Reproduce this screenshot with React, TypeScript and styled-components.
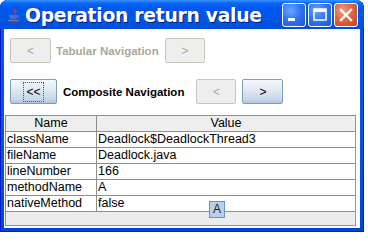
import React from "react";
import styled, { createGlobalStyle } from "styled-components";

const GlobalStyle = createGlobalStyle`
  body {
    margin: 0;
    background: #ffffff;
    font-family: "Liberation Sans", Arial, sans-serif;
  }
`;

const Window = styled.div`
  position: relative;
  width: 364px;
  height: 232px;
  display: flex;
  flex-direction: column;
  background: linear-gradient(to bottom, #0058ee 0%, #0055e5 60%, #0046d6 100%);
  border-radius: 8px 8px 0 0;
  box-sizing: border-box;
  padding: 0 4px 4px 4px;
  box-shadow: inset 1px 0 0 #0019cf, inset -1px 0 0 #001ea0, inset 0 -1px 0 #001ea0;
`;

const TitleBar = styled.div`
  height: 30px;
  display: flex;
  align-items: center;
  margin: 0 -4px;
  padding: 1px 6px 0 7px;
  box-sizing: border-box;
  border-radius: 8px 8px 0 0;
  background: linear-gradient(
    to bottom,
    #3d95ff 0px,
    #0a66f6 3px,
    #0058ee 8px,
    #0055e5 20px,
    #0050dd 27px,
    #0046d0 30px
  );
`;

const AppIcon = styled.svg`
  width: 14px;
  height: 16px;
  margin-right: 4px;
  flex: none;
`;

const Title = styled.div`
  flex: 1;
  color: #ffffff;
  font-family: "DejaVu Sans", Verdana, sans-serif;
  font-weight: bold;
  font-size: 18.8px;
  letter-spacing: -0.3px;
  text-shadow: 1px 1px 0 #0a1883;
  white-space: nowrap;
`;

const CaptionButton = styled.div<{ $close?: boolean }>`
  width: 22px;
  height: 22px;
  margin-left: 2px;
  border: 1px solid #ffffff;
  border-radius: 3px;
  display: flex;
  align-items: center;
  justify-content: center;
  background: ${p =>
    p.$close
      ? "radial-gradient(circle at 35% 30%, #f0a080 0%, #e1653e 45%, #c4411c 100%)"
      : "radial-gradient(circle at 35% 30%, #6aa6ff 0%, #2f72ef 50%, #1d55d6 100%)"};
`;

const Client = styled.div`
  flex: 1;
  background: #ffffff;
  display: flex;
  flex-direction: column;
  padding: 9px 1px 2px 1px;
`;

const NavRow = styled.div<{ $gapAfter: number }>`
  display: flex;
  align-items: center;
  height: 25px;
  padding-left: 5px;
  margin-bottom: ${p => p.$gapAfter}px;
`;

const NavButton = styled.div<{ $w: number; $disabled?: boolean; $ml?: number }>`
  width: ${p => p.$w}px;
  height: 25px;
  box-sizing: border-box;
  margin-left: ${p => p.$ml ?? 0}px;
  flex: none;
  display: flex;
  align-items: center;
  justify-content: center;
  font-family: "Liberation Sans", Arial, sans-serif;
  font-size: 12px;
  border: 1px solid ${p => (p.$disabled ? "#c9c7ba" : "#7f9db9")};
  border-radius: 2px;
  color: ${p => (p.$disabled ? "#aca899" : "#000000")};
  background: ${p =>
    p.$disabled
      ? "#eeeeee"
      : "linear-gradient(to bottom, #f4f8fc 0%, #dfe8f3 45%, #c6d6e9 85%, #b0c5dd 100%)"};
`;

const FocusBox = styled.span`
  outline: 1px dotted #555555;
  padding: 2px 2px;
  line-height: 14px;
`;

const NavLabel = styled.div<{ $disabled?: boolean; $ml: number }>`
  margin-left: ${p => p.$ml}px;
  font-weight: bold;
  font-size: 11.5px;
  color: ${p => (p.$disabled ? "#aca899" : "#000000")};
  white-space: nowrap;
`;

const ScrollPane = styled.div`
  width: 351px;
  height: 111px;
  box-sizing: border-box;
  border: 1px solid #8e8f8f;
  border-right-color: #9a9a9a;
  background: #ececec;
  position: relative;
`;

const Table = styled.div`
  display: grid;
  grid-template-columns: 91px 1fr;
`;

const HeaderCell = styled.div<{ $last?: boolean }>`
  height: 15px;
  line-height: 15px;
  background: #eeeeee;
  border-bottom: 1px solid #8e8e8e;
  border-right: ${p => (p.$last ? "none" : "1px solid #8e8e8e")};
  text-align: center;
  font-size: 12.5px;
  color: #000000;
`;

const Cell = styled.div<{ $last?: boolean }>`
  height: 15px;
  line-height: 15px;
  background: #ffffff;
  border-bottom: 1px solid #8e8e8e;
  border-right: ${p => (p.$last ? "none" : "1px solid #8e8e8e")};
  padding-left: 1px;
  font-size: 12.5px;
  color: #000000;
  white-space: nowrap;
  overflow: hidden;
`;

const Tip = styled.div`
  position: absolute;
  left: 203px;
  top: 85px;
  width: 14px;
  height: 15px;
  border: 1px solid #6f8fbf;
  background: #b8cfe8;
  font-size: 12px;
  line-height: 15px;
  text-align: center;
  color: #222222;
`;

const rows: [string, string][] = [
  ["className", "Deadlock$DeadlockThread3"],
  ["fileName", "Deadlock.java"],
  ["lineNumber", "166"],
  ["methodName", "A"],
  ["nativeMethod", "false"],
];

const JavaIcon = () => (
  <AppIcon viewBox="0 0 14 16">
    <path d="M7 1 C5 3 9 4 7 6 M9 2 C8 4 10 5 8 7" stroke="#e03020" strokeWidth="1.2" fill="none" />
    <path d="M2 8 H11 C11 11 10 12 6.5 12 C3 12 2 11 2 8 Z" fill="#4a6fc0" />
    <path d="M11 9 C13 9 13 11 11 11" stroke="#4a6fc0" strokeWidth="1" fill="none" />
    <path d="M1 13.5 H12" stroke="#5a7fd0" strokeWidth="1.2" />
    <path d="M3 15 H10" stroke="#c03020" strokeWidth="1" />
  </AppIcon>
);

const App: React.FC = () => (
  <>
    <GlobalStyle />
    <Window>
      <TitleBar>
        <JavaIcon />
        <Title>Operation return value</Title>
        <CaptionButton>
          <svg width="22" height="22" viewBox="0 0 22 22">
            <rect x="5" y="14" width="7" height="3" fill="#ffffff" />
          </svg>
        </CaptionButton>
        <CaptionButton>
          <svg width="22" height="22" viewBox="0 0 22 22">
            <rect x="5" y="5" width="12" height="11" fill="none" stroke="#ffffff" strokeWidth="1.5" />
            <rect x="5" y="5" width="12" height="3" fill="#ffffff" />
          </svg>
        </CaptionButton>
        <CaptionButton $close>
          <svg width="22" height="22" viewBox="0 0 22 22">
            <path d="M6 6 L16 16 M16 6 L6 16" stroke="#ffffff" strokeWidth="2.4" strokeLinecap="square" />
          </svg>
        </CaptionButton>
      </TitleBar>
      <Client>
        <NavRow $gapAfter={16}>
          <NavButton $w={41} $disabled>&lt;</NavButton>
          <NavLabel $disabled $ml={5}>Tabular Navigation</NavLabel>
          <NavButton $w={40} $disabled $ml={6}>&gt;</NavButton>
        </NavRow>
        <NavRow $gapAfter={11}>
          <NavButton $w={47}>
            <FocusBox>&lt;&lt;</FocusBox>
          </NavButton>
          <NavLabel $ml={6}>Composite Navigation</NavLabel>
          <NavButton $w={40} $disabled $ml={12}>&lt;</NavButton>
          <NavButton $w={41} $ml={6}>&gt;</NavButton>
        </NavRow>
        <ScrollPane>
          <Table>
            <HeaderCell>Name</HeaderCell>
            <HeaderCell $last>Value</HeaderCell>
            {rows.map(([k, v]) => (
              <React.Fragment key={k}>
                <Cell>{k}</Cell>
                <Cell $last>{v}</Cell>
              </React.Fragment>
            ))}
          </Table>
          <Tip>A</Tip>
        </ScrollPane>
      </Client>
    </Window>
  </>
);

export default App;
